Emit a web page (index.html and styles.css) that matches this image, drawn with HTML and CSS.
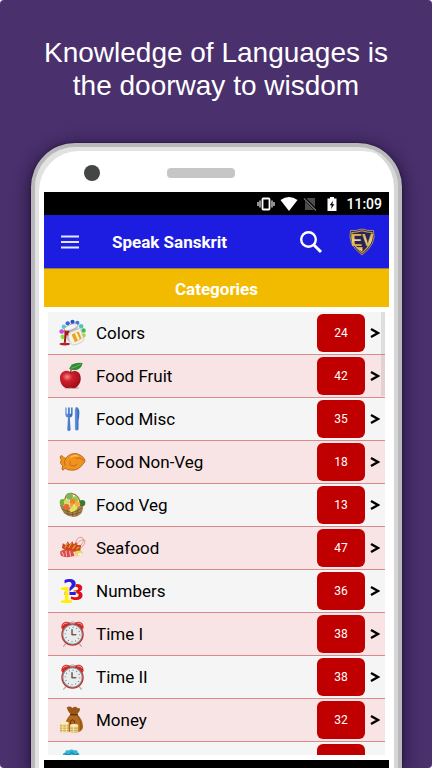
FILE: index.html
```html
<!DOCTYPE html>
<html lang="en">
<head>
    <meta charset="UTF-8">
    <meta name="viewport" content="width=device-width, initial-scale=1.0">
    <title>Speak Sanskrit</title>
    <link rel="stylesheet" href="styles.css">
</head>
<body>
    <!-- shared shapes -->
    <svg class="defs" width="0" height="0" aria-hidden="true">
        <defs>
            <linearGradient id="gold" x1="0" y1="0" x2="0" y2="1">
                <stop offset="0" stop-color="#d39a3c"/>
                <stop offset="0.5" stop-color="#f3d27c"/>
                <stop offset="1" stop-color="#c58a2c"/>
            </linearGradient>
            <radialGradient id="apple" cx="0.35" cy="0.35" r="0.7">
                <stop offset="0" stop-color="#f28a8a"/>
                <stop offset="0.35" stop-color="#d0202c"/>
                <stop offset="1" stop-color="#9c0f18"/>
            </radialGradient>
            <linearGradient id="blue" x1="0" y1="0" x2="1" y2="0">
                <stop offset="0" stop-color="#6a9be6"/>
                <stop offset="1" stop-color="#2a5fb8"/>
            </linearGradient>
            <symbol id="chevron" viewBox="0 0 10 12">
                <path d="M1 2L8 6L1 10" fill="none" stroke="#000" stroke-width="2.400"/>
            </symbol>
            <symbol id="clock" viewBox="0 0 28 28">
                <path d="M7 24L4.500 27M21 24L23.500 27" stroke="#aaa" stroke-width="1.300"/>
                <path d="M2.500 8C2 3 6 0 11 2L12 4L4 9ZM25.500 8C26 3 22 0 17 2L16 4L24 9Z" fill="#d02a2a"/>
                <path d="M4 5C5 3 7 2.500 9 2.800M24 5C23 3 21 2.500 19 2.800" fill="none" stroke="#f3a4a0" stroke-width="1"/>
                <path d="M11 2.500C13 1.200 15 1.200 17 2.500" fill="none" stroke="#999" stroke-width="1"/>
                <circle cx="14" cy="14.500" r="11.600" fill="#c22a2a"/>
                <circle cx="14" cy="14.500" r="10.600" fill="#8d8f92"/>
                <circle cx="14" cy="14.500" r="9.500" fill="#e9eced"/>
                <circle cx="14" cy="14.500" r="7.500" fill="none" stroke="#777" stroke-width="1.300" stroke-dasharray="0.900 3.027"/>
                <path d="M13.500 9V14.800H18" fill="none" stroke="#333" stroke-width="1.200"/>
                <path d="M13.500 14.800H17" stroke="#c33" stroke-width="0.600"/>
            </symbol>
        </defs>
    </svg>

    <main class="promo">
        <h1 class="headline">Knowledge of Languages is<br>the doorway to wisdom</h1>

        <div class="phone">
            <div class="bezel">
                <span class="camera"></span>
                <span class="speaker"></span>
            </div>

            <div class="screen">
                <div class="status-bar">
                    <svg class="status-icon" viewBox="0 0 18 16" aria-label="Vibrate">
                        <rect x="5.500" y="2.500" width="7" height="11" rx="0.800" fill="none" stroke="#fff" stroke-width="1.800"/>
                        <path d="M3 4.500V11.500M15 4.500V11.500M1 6V10M17 6V10" stroke="#ddd" stroke-width="1.300"/>
                    </svg>
                    <svg class="status-icon" viewBox="0 0 18 16" aria-label="Wi-Fi">
                        <path d="M0.500 4Q9 -2 17.500 4L9 15Z" fill="#fff"/>
                    </svg>
                    <svg class="status-icon sim" viewBox="0 0 14 16" aria-label="No SIM">
                        <path d="M4.500 2H12V14H2V4.500Z" fill="#4c4c4c"/>
                        <path d="M1 2L14 15" stroke="#000" stroke-width="3"/>
                        <path d="M1 2.500L13 14.500" stroke="#777" stroke-width="1.100"/>
                    </svg>
                    <svg class="status-icon battery" viewBox="0 0 10 16" aria-label="Charging">
                        <path d="M3 1H7V2.500H9.500V15H0.500V2.500H3Z" fill="#fff"/>
                        <path d="M6.300 4.500L2.700 9.200H4.700L4 13L7.400 8.200H5.300Z" fill="#000"/>
                    </svg>
                    <span class="time">11:09</span>
                </div>

                <header class="app-bar">
                    <button class="icon-btn" type="button" aria-label="Menu">
                        <svg class="menu-icon" viewBox="0 0 18 14"><path d="M0 1.500H18M0 7H18M0 12.500H18" stroke="#e6e6fb" stroke-width="2"/></svg>
                    </button>
                    <span class="app-title">Speak Sanskrit</span>
                    <button class="icon-btn" type="button" aria-label="Search">
                        <svg class="search-icon" viewBox="0 0 24 24"><circle cx="9.500" cy="9.500" r="7.300" fill="none" stroke="#fff" stroke-width="2.400"/><path d="M14.700 14.700L22 22" stroke="#fff" stroke-width="3"/></svg>
                    </button>
                    <button class="icon-btn" type="button" aria-label="EV">
                        <svg class="logo-icon" viewBox="0 0 28 28">
                            <path d="M2.500 2.500Q8 3 14 1Q20 3 25.500 2.500Q29 16 14 27Q-1 16 2.500 2.500Z" fill="#252457" stroke="#b89a6c" stroke-width="0.900"/>
                            <path d="M4 4.500Q9 4.500 14 2.800Q19 4.500 24 4.500Q26 15 14 25Q2 15 4 4.500Z" fill="#252457" stroke="url(#gold)" stroke-width="1.200"/>
                            <path d="M8 19H14.500V24Q10 21 8 19Z" fill="url(#gold)"/>
                            <text class="logo-text" x="14" y="18" text-anchor="middle" fill="url(#gold)">EV</text>
                        </svg>
                    </button>
                </header>

                <h2 class="section-title">Categories</h2>

                <nav class="category-list" aria-label="Categories">
                    <a class="category" href="#colors">
                        <svg class="category-icon" viewBox="0 0 28 28">
                            <g>
                                <circle cx="4" cy="18" r="2.400" fill="#86e02c"/>
                                <circle cx="2.800" cy="12.500" r="2.400" fill="#c64be0"/>
                                <circle cx="5" cy="7.500" r="2.300" fill="#57c8e0"/>
                                <circle cx="9" cy="4" r="2.200" fill="#3c63d8"/>
                                <circle cx="14" cy="2.500" r="2.200" fill="#2f4fc0"/>
                                <circle cx="19" cy="3.500" r="2.200" fill="#3c7cd8"/>
                                <circle cx="23" cy="7" r="2.300" fill="#4ac7bd"/>
                                <circle cx="25.500" cy="11.500" r="2.300" fill="#46b84a"/>
                                <circle cx="25.500" cy="16.500" r="2.200" fill="#9bdc3c"/>
                            </g>
                            <path d="M6 10L19 5L20 12L13 24L9 22Z" fill="#c4c4c8"/>
                            <path d="M5.500 10Q10 9 10.500 12Q12 14 11 17L8 16L7 24H5Q6 16 5.500 10Z" fill="#a8141c"/>
                            <ellipse cx="12.500" cy="8" rx="7.500" ry="2.800" transform="rotate(-20 12.500 8)" fill="#f4f4f6" stroke="#999" stroke-width="0.700"/>
                            <ellipse cx="6" cy="25.500" rx="5.500" ry="1.400" fill="#b8202a"/>
                            <path d="M10 14L22 9L26 21Q22 26 14 26.500Q9 22 10 14Z" fill="#f3f1ec" stroke="#b9b3a8" stroke-width="0.600"/>
                            <path d="M13 15.500L20.500 12.500L23.500 20L16.500 23.500Z" fill="#e9a426"/>
                            <path d="M16.500 14.500L18.500 13.700L21.500 20.500L19.500 21.600Z" fill="#fff3ca"/>
                        </svg>
                        <span class="category-name">Colors</span>
                        <span class="count">24</span>
                        <svg class="chevron"><use href="#chevron"/></svg>
                    </a>
                    <a class="category" href="#food-fruit">
                        <svg class="category-icon" viewBox="0 0 28 28">
                            <ellipse cx="13" cy="26.300" rx="8" ry="1.200" fill="#c9a9aa"/>
                            <path d="M12 10C7 6.500 1 10 1 16C1 22 5 27 9.500 26.500Q12 26 14 26.500C19 27 23 21 22.500 16C22.500 10 17 7 12 10Z" fill="url(#apple)"/>
                            <path d="M12 11Q12 7 14 4.500" fill="none" stroke="#52351c" stroke-width="1.300"/>
                            <path d="M10.500 6.500Q13 -1 24.500 0.500Q23 8 16 8Q13 8 10.500 6.500Z" fill="#2f8a34"/>
                            <path d="M12.500 6Q18 4.500 23 1.500" fill="none" stroke="#8acb6c" stroke-width="0.700"/>
                        </svg>
                        <span class="category-name">Food Fruit</span>
                        <span class="count">42</span>
                        <svg class="chevron"><use href="#chevron"/></svg>
                    </a>
                    <a class="category" href="#food-misc">
                        <svg class="category-icon" viewBox="0 0 28 28">
                            <path d="M6.500 2V9Q6.500 12 9.300 12.500L8.500 25.500Q10.300 27.500 12 25.500L11.200 12.500Q14 12 14 9V2H12.600V8.500H11.200V2H9.300V8.500H7.900V2Z" fill="url(#blue)"/>
                            <path d="M16.500 25V4Q17 1.500 18.500 1.500Q21.500 3 21 9Q21 13 20.200 15V25Q18.200 27 16.500 25Z" fill="url(#blue)"/>
                        </svg>
                        <span class="category-name">Food Misc</span>
                        <span class="count">35</span>
                        <svg class="chevron"><use href="#chevron"/></svg>
                    </a>
                    <a class="category" href="#food-non-veg">
                        <svg class="category-icon" viewBox="0 0 28 28">
                            <path d="M1.500 8Q3 6 5 9.500L7 10Q12 4 19 5.500Q24 7 26.500 11Q28 14 25 16Q20 23 13 22.500Q8 22.500 6.500 20.500L4 22.500Q2 21.500 4 18Q0 15 2.500 12Q0.500 10 1.500 8Z" fill="#f0921e" stroke="#a85a10" stroke-width="0.800"/>
                            <path d="M12 13Q10 17 13 18Q17 19 19 16M7 10.500Q4 14 6.500 18M17 10Q22 9 26 12.500" fill="none" stroke="#b5640e" stroke-width="0.800"/>
                            <path d="M12 9Q16 6.500 20 8" fill="none" stroke="#ffc46a" stroke-width="1.200"/>
                        </svg>
                        <span class="category-name">Food Non-Veg</span>
                        <span class="count">18</span>
                        <svg class="chevron"><use href="#chevron"/></svg>
                    </a>
                    <a class="category" href="#food-veg">
                        <svg class="category-icon" viewBox="0 0 28 28">
                            <path d="M6 12Q6 1 13 2Q22 4 22 14" fill="none" stroke="#9b7440" stroke-width="1.400"/>
                            <path d="M1 13Q14 20 25 13Q26 25 16 26.500Q4 26 1 14Z" fill="#a98250"/>
                            <path d="M3 18Q14 25 24 17M5 22Q14 26 23 21M8 17L10 25M14 19V26M20 18L18 25" fill="none" stroke="#6f4f26" stroke-width="0.700"/>
                            <circle cx="11" cy="5" r="3.500" fill="#7db552"/>
                            <circle cx="4" cy="11" r="3.300" fill="#72b13b"/>
                            <circle cx="24" cy="12" r="3.300" fill="#3c7a2a"/>
                            <circle cx="8" cy="11" r="3" fill="#d6dc6c"/>
                            <circle cx="17" cy="8" r="3.200" fill="#9cc64e"/>
                            <circle cx="14" cy="10.500" r="3" fill="#ee8424"/>
                            <circle cx="19" cy="13" r="3" fill="#f0b040"/>
                            <circle cx="8" cy="16" r="3" fill="#e86a2a"/>
                            <circle cx="13" cy="14" r="2" fill="#e9a13c"/>
                            <ellipse cx="15" cy="18" rx="4.500" ry="2.500" transform="rotate(-30 15 18)" fill="#ecdf52"/>
                        </svg>
                        <span class="category-name">Food Veg</span>
                        <span class="count">13</span>
                        <svg class="chevron"><use href="#chevron"/></svg>
                    </a>
                    <a class="category" href="#seafood">
                        <svg class="category-icon" viewBox="0 0 28 28">
                            <path d="M17 12Q17 2 24 3Q28 6 21 13M18 11Q22 4 27 6Q28 9 23 14" fill="none" stroke="#d88a78" stroke-width="0.800"/>
                            <ellipse cx="13" cy="19" rx="12" ry="4.500" fill="#f2d8cd"/>
                            <path d="M3 14L4 9L7 11L9 7L11 10L14 7L15 10L18 8L19 11L23 11L22 17Q12 20 3 14Z" fill="#c9491c"/>
                            <path d="M6 14L9 9M10 14L13 9M14 15L17 11M18 15L21 13" stroke="#f09a42" stroke-width="1.200"/>
                            <path d="M1 18Q5 14 9 17L14 16L16 22Q8 25 2 22Z" fill="#dc4848"/>
                            <path d="M3 18L5 22M7 17L8 23M11 17L12 23" stroke="#f6b8b2" stroke-width="1.100"/>
                            <ellipse cx="20.500" cy="19.500" rx="4" ry="2.800" fill="#ead75c"/>
                            <ellipse cx="22" cy="20.500" rx="2.500" ry="1.600" fill="#eaf0ea"/>
                        </svg>
                        <span class="category-name">Seafood</span>
                        <span class="count">47</span>
                        <svg class="chevron"><use href="#chevron"/></svg>
                    </a>
                    <a class="category" href="#numbers">
                        <svg class="category-icon digits" viewBox="0 0 28 28" aria-hidden="true">
                            <text x="11" y="23" fill="#e01010">3</text>
                            <text x="4" y="18" fill="#2c1ce0">2</text>
                            <text x="0" y="26" fill="#ffee10">1</text>
                        </svg>
                        <span class="category-name">Numbers</span>
                        <span class="count">36</span>
                        <svg class="chevron"><use href="#chevron"/></svg>
                    </a>
                    <a class="category" href="#time-1">
                        <svg class="category-icon"><use href="#clock"/></svg>
                        <span class="category-name">Time I</span>
                        <span class="count">38</span>
                        <svg class="chevron"><use href="#chevron"/></svg>
                    </a>
                    <a class="category" href="#time-2">
                        <svg class="category-icon"><use href="#clock"/></svg>
                        <span class="category-name">Time II</span>
                        <span class="count">38</span>
                        <svg class="chevron"><use href="#chevron"/></svg>
                    </a>
                    <a class="category" href="#money">
                        <svg class="category-icon" viewBox="0 0 28 28">
                            <path d="M12 8Q9 5 8 1Q11 -1 14 1.500Q17 -1 19 1.500L22 2Q22 5 19 8Z" fill="#9a5518"/>
                            <path d="M12 8H19Q25 14 25 21Q25 27 16 27Q5 27 6 20Q7 13 12 8Z" fill="#b3681f"/>
                            <path d="M19 9Q24 16 22.500 24M10 13Q8 16 8 20" fill="none" stroke="#8a4a14" stroke-width="1"/>
                            <path d="M11.500 8.500H19.500" stroke="#5f300a" stroke-width="1.400"/>
                            <path d="M12 18.500V15Q14 12.500 16 15V17" fill="none" stroke="#5f300a" stroke-width="1"/>
                            <path d="M1 17H10V27H1ZM11.500 19.500H20V27H11.500Z" fill="#e9d38a"/>
                            <ellipse cx="5.500" cy="17" rx="4.500" ry="1.500" fill="#f8edb8"/>
                            <ellipse cx="15.800" cy="19.500" rx="4.200" ry="1.400" fill="#f8edb8"/>
                            <path d="M1 20H10M1 22.500H10M1 25H10M12 22.500H20M12 25H20" stroke="#b88f36" stroke-width="0.700"/>
                            <path d="M4 17V27M7.500 17V27M15 20V27" stroke="#fff6cf" stroke-width="0.700"/>
                        </svg>
                        <span class="category-name">Money</span>
                        <span class="count">32</span>
                        <svg class="chevron"><use href="#chevron"/></svg>
                    </a>
                    <a class="category" href="#more" aria-label="More">
                        <svg class="category-icon" viewBox="0 0 28 28">
                            <path d="M4 8Q3 3 7 3Q6 0 10 1Q13 -1 16 1Q20 0 19 3Q22 3 21 8L24 14V27H3V14Z" fill="#2fb3d6"/>
                            <path d="M6 4L10 6L13 3L17 6L20 4" fill="none" stroke="#157a9c" stroke-width="1"/>
                        </svg>
                        <span class="category-name"></span>
                        <span class="count"></span>
                    </a>
                </nav>

                <div class="nav-bar"></div>
            </div>
        </div>
    </main>
</body>
</html>
```
FILE: styles.css
```css
* {
    margin: 0;
    padding: 0;
    box-sizing: border-box;
}

body {
    font-family: Roboto, "Liberation Sans", sans-serif;
    background: #ffffff;
    color: #000000;
}

.defs {
    position: absolute;
}

.promo {
    height: 100vh;
    display: flex;
    flex-direction: column;
    background: #4a306d;
    border-radius: 4px;
    overflow: hidden;
}

.headline {
    padding: 36px 0 41px;
    font-family: "Liberation Sans", Arial, sans-serif;
    font-size: 28px;
    font-weight: normal;
    line-height: 33px;
    text-align: center;
    color: #ffffff;
}

/* phone frame */
.phone {
    flex: 1;
    min-height: 0;
    display: flex;
    flex-direction: column;
    margin: 0 30px 0 31px;
    padding: 0 4px;
    background: #ffffff;
    border: solid #b9b9bb;
    border-width: 4px 4px 0;
    border-radius: 44px 44px 0 0;
    box-shadow:
        inset 4px 4px 0 #e2e2e2,
        inset -4px 0 0 #d6d6d6,
        0 0 2px #1b0f30,
        0 4px 18px rgba(15, 5, 35, 0.8);
}

.bezel {
    flex: none;
    display: flex;
    align-items: center;
    height: 45px;
    padding: 6px 45px 0;
}

.camera {
    width: 16px;
    height: 16px;
    border-radius: 50%;
    background: #444645;
}

.speaker {
    width: 68px;
    height: 10px;
    margin-left: 67px;
    border-radius: 4px;
    background: #c6c6c6;
}

.screen {
    flex: 1;
    min-height: 0;
    display: flex;
    flex-direction: column;
    margin: 0 5px;
    background: #ffffff;
}

.status-bar {
    flex: none;
    display: flex;
    align-items: center;
    justify-content: flex-end;
    gap: 5px;
    height: 23px;
    padding-right: 7px;
    background: #000000;
}

.status-icon {
    width: 18px;
    height: 16px;
}

.status-icon.sim {
    width: 14px;
}

.status-icon.battery {
    width: 10px;
    margin: 0 4px 0 5px;
}

.time {
    font-size: 14px;
    font-weight: 500;
    color: #ffffff;
}

.app-bar {
    flex: none;
    display: flex;
    align-items: center;
    height: 53px;
    padding: 0 14px 0 13px;
    background: #1d1de2;
}

.icon-btn {
    display: flex;
    align-items: center;
    justify-content: center;
    width: 26px;
    height: 40px;
    border: none;
    background: none;
    cursor: pointer;
}

.menu-icon {
    width: 18px;
    height: 14px;
}

.search-icon {
    flex: none;
    width: 24px;
    height: 24px;
}

.logo-icon {
    flex: none;
    width: 28px;
    height: 28px;
}

.logo-text {
    font-size: 17px;
    font-weight: 900;
}

.app-title {
    flex: 1;
    padding-left: 29px;
    font-size: 17px;
    font-weight: bold;
    color: #ffffff;
}

.app-bar .icon-btn + .icon-btn {
    margin-left: 25px;
}

.section-title {
    flex: none;
    height: 39px;
    border-top: 1px solid #96834a;
    background: #f2bb00;
    font-size: 17px;
    font-weight: bold;
    line-height: 40px;
    text-align: center;
    color: #ffffff;
}

/* category list */
.category-list {
    position: relative;
    flex: 1;
    min-height: 0;
    margin: 5px 4px;
    overflow: hidden;
}

.category-list::after {
    content: '';
    position: absolute;
    top: 0;
    right: 0;
    width: 4px;
    height: 84px;
    background: rgba(120, 120, 120, 0.18);
}

.category {
    display: flex;
    align-items: center;
    height: 43px;
    padding: 0 5px 0 11px;
    border-bottom: 1px solid #d98a8c;
    background: #f5f5f5;
    color: #000000;
    text-decoration: none;
}

.category:nth-child(even) {
    background: #f8e4e4;
}

.category-icon {
    flex: none;
    width: 27px;
    height: 28px;
}

.digits {
    overflow: visible;
}

.digits text {
    font-family: "DejaVu Sans", sans-serif;
    font-size: 22px;
    font-weight: bold;
    stroke: #ffffff;
    stroke-width: 1px;
    paint-order: stroke;
}

.category-name {
    flex: 1;
    padding-left: 10px;
    font-size: 17px;
    line-height: 24px;
}

.count {
    width: 48px;
    height: 38px;
    border-radius: 6px;
    background: #c00000;
    font-size: 12px;
    line-height: 39px;
    text-align: center;
    color: #ffffff;
}

.chevron {
    width: 10px;
    height: 12px;
    margin-left: 5px;
}

.category:last-child {
    padding-right: 20px;
}

.nav-bar {
    flex: none;
    height: 8px;
    background: #000000;
}
```
